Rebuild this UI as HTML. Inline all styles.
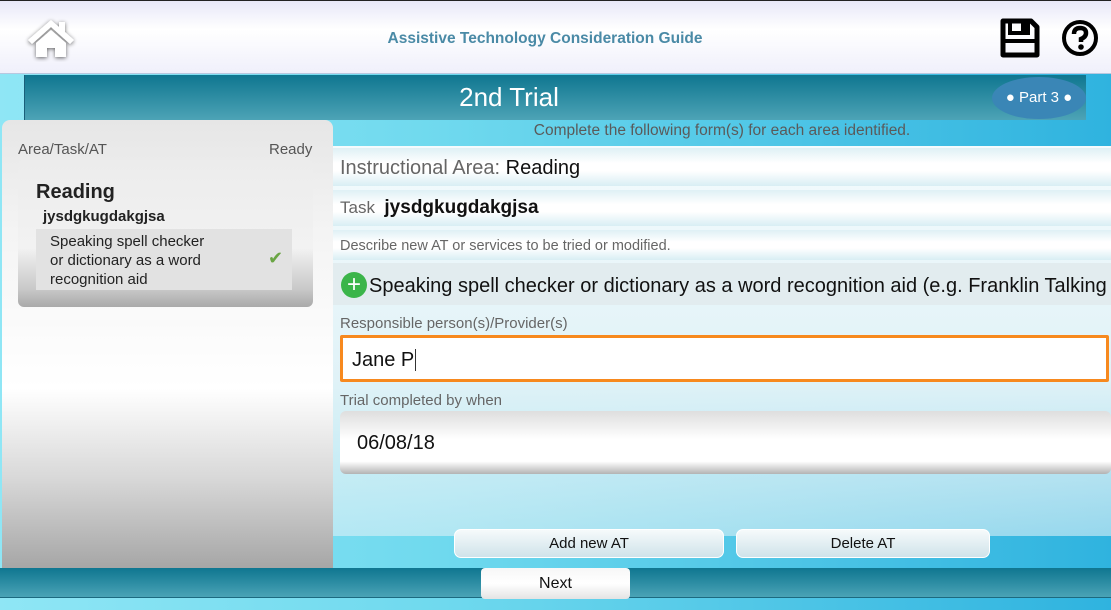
<!DOCTYPE html>
<html><head><meta charset="utf-8"><style>
*{margin:0;padding:0;box-sizing:border-box}
body{width:1111px;height:610px;overflow:hidden;position:relative;font-family:"Liberation Sans",sans-serif;background:linear-gradient(90deg,#8fe6f5 0%,#6fd9ee 40%,#2fb3df 100%)}
.abs{position:absolute}
#hdr{left:0;top:0;width:1111px;height:74px;background:linear-gradient(#e8e8f8,#fff 40%,#f0f0fb);border-bottom:1px solid #b8c8e0;border-top:1px solid #222}
#ttl{left:0;width:1090px;top:30px;text-align:center;font-weight:bold;font-size:15.5px;color:#4a8aa6}
#bar{left:24px;top:75px;width:1062px;height:45px;background:linear-gradient(#0f7690,#4da3b6);border-left:1px solid #1a5f7a}
#bar span{position:absolute;left:0;width:968px;text-align:center;top:7px;color:#fff;font-size:26px}
#part{left:992px;top:77px;width:94px;height:42px;border-radius:50%;background:#3a86b6;color:#fff;font-size:15px;text-align:center;line-height:42px}
#sub{left:333px;width:778px;top:122px;text-align:center;font-size:15.5px;color:#5a5a5a}
#left{left:2px;top:120px;width:331px;height:448px;border-radius:8px 8px 0 0;background:linear-gradient(#e6e6e6 0%,#f4f4f4 25%,#fff 60%,#d8d8d8 80%,#a6a6a6 100%)}
#card{left:18px;top:160px;width:295px;height:147px;border-radius:6px;background:linear-gradient(#ececec 0%,#f2f2f2 60%,#c8c8c8 88%,#a9a9a9 100%)}
#at{left:36px;top:229px;width:256px;height:61px;background:#e2e2e2;font-size:15px;color:#222;padding:3px 0 0 14px;line-height:19px}
#form{left:333px;top:146px;width:778px;height:390px;background:linear-gradient(#f4fbfd 0%,#e0f2f7 60%,rgba(220,240,246,.6) 100%)}
.row{position:absolute;left:0;width:778px;background:linear-gradient(#dff0f5,#fff 40%,#fff 60%,#d8eef4)}
#inp{left:340px;top:335px;width:769px;height:47px;border:3px solid #f7891e;background:#fff;border-radius:2px;font-size:20px;padding:11px 0 0 9px;color:#111}
#date{left:340px;top:411px;width:771px;height:63px;border-radius:6px;background:linear-gradient(#dedede,#fff 45%,#fff 80%,#b3b3b3);font-size:20px;padding:21px 0 0 17px;color:#111}
.btn{position:absolute;top:529px;height:29px;border-radius:7px;background:linear-gradient(#f6fafb,#cfe3ea);border:1px solid #fff;font-size:15px;text-align:center;line-height:28px;color:#111}
#bot{left:0;top:568px;width:1111px;height:30px;background:linear-gradient(#0f7690,#4aa3b6);border-bottom:1px solid #1c6a80}
#next{left:481px;top:568px;width:149px;height:31px;border-radius:4px;background:linear-gradient(#f7f7f7,#fff 50%,#e4e4e4);font-size:16px;text-align:center;line-height:32px;color:#111}
</style></head><body>
<div id="hdr" class="abs"></div>
<svg class="abs" style="left:24px;top:16px" width="54" height="46" viewBox="0 0 54 46"><defs><filter id="s" x="-20%" y="-20%" width="140%" height="140%"><feGaussianBlur in="SourceAlpha" stdDeviation="2"/><feOffset dx="0" dy="1"/><feComponentTransfer><feFuncA type="linear" slope="0.6"/></feComponentTransfer><feMerge><feMergeNode/><feMergeNode in="SourceGraphic"/></feMerge></filter></defs><g filter="url(#s)"><path d="M27 4 L4 24 L8 28 L27 11 L46 28 L50 24 L41 16 L41 6 L35 6 L35 11 Z" fill="#fff"/><path d="M12 27 L27 14 L42 27 V41 H31 V32 H23 V41 H12 Z" fill="#fff"/></g></svg>
<div id="ttl" class="abs">Assistive Technology Consideration Guide</div>
<svg class="abs" style="left:1000px;top:18px" width="40" height="40" viewBox="0 0 40 40"><path d="M3 3 H31 L37 9 V37 H3 Z" fill="none" stroke="#000" stroke-width="5" stroke-linejoin="round"/><rect x="10" y="3" width="18" height="12" fill="none" stroke="#000" stroke-width="4"/><rect x="21" y="5" width="5" height="8" fill="#000"/><rect x="5" y="21" width="30" height="4" fill="#000"/></svg>
<svg class="abs" style="left:1060px;top:19px" width="40" height="38" viewBox="0 0 40 38"><circle cx="20" cy="19" r="16" fill="none" stroke="#000" stroke-width="4"/><path d="M14 15 Q14 9 20 9 Q26 9 26 14 Q26 18 21 20 V23" fill="none" stroke="#000" stroke-width="4.5"/><circle cx="21" cy="28" r="2.8" fill="#000"/></svg>
<div id="bar" class="abs"><span>2nd Trial</span></div>
<div id="part" class="abs">● Part 3 ●</div>
<div id="sub" class="abs">Complete the following form(s) for each area identified.</div>
<div id="left" class="abs"></div>
<div class="abs" style="left:18px;top:141px;font-size:15px;color:#555">Area/Task/AT</div>
<div class="abs" style="left:269px;top:141px;font-size:15px;color:#555">Ready</div>
<div id="card" class="abs"></div>
<div class="abs" style="left:36px;top:181px;font-size:20px;font-weight:bold;color:#222">Reading</div>
<div class="abs" style="left:43px;top:208px;font-size:15px;font-weight:bold;color:#222">jysdgkugdakgjsa</div>
<div id="at" class="abs">Speaking spell checker<br>or dictionary as a word<br>recognition aid</div>
<div class="abs" style="left:268px;top:248px;color:#6aa544;font-size:18px">✔</div>
<div id="form" class="abs"></div>
<div class="row" style="left:333px;top:148px;height:38px"></div>
<div class="row" style="left:333px;top:190px;height:36px"></div>
<div class="row" style="left:333px;top:230px;height:30px"></div>
<div class="abs" style="left:333px;top:263px;width:778px;height:42px;background:#e2ecef"></div>
<div class="abs" style="left:340px;top:157px;font-size:20px;color:#666">Instructional Area: <span style="color:#111">Reading</span></div>
<div class="abs" style="left:340px;top:197px;font-size:17px;color:#666">Task &nbsp;<b style="color:#111;font-size:19px">jysdgkugdakgjsa</b></div>
<div class="abs" style="left:340px;top:238px;font-size:14.5px;color:#666">Describe new AT or services to be tried or modified.</div>
<div class="abs" style="left:341px;top:272px;width:26px;height:26px;border-radius:50%;background:#3bb54a;color:#fff;font-size:24px;line-height:25px;text-align:center">+</div>
<div class="abs" style="left:369px;top:275px;font-size:20px;color:#111;white-space:nowrap;width:742px;overflow:hidden">Speaking spell checker or dictionary as a word recognition aid (e.g. Franklin Talking</div>
<div class="abs" style="left:340px;top:315px;font-size:15px;color:#666">Responsible person(s)/Provider(s)</div>
<div id="inp" class="abs">Jane P<span style="border-left:1px solid #333;margin-left:1px"></span></div>
<div class="abs" style="left:340px;top:392px;font-size:15px;color:#666">Trial completed by when</div>
<div id="date" class="abs">06/08/18</div>
<div class="btn" style="left:454px;width:270px">Add new AT</div>
<div class="btn" style="left:736px;width:254px">Delete AT</div>
<div id="bot" class="abs"></div>
<div id="next" class="abs">Next</div>
</body></html>
